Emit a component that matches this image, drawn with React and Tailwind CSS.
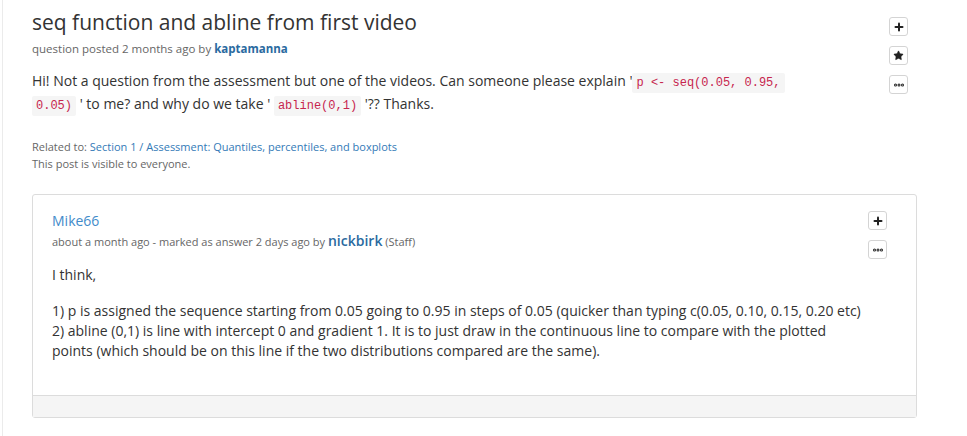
import { Plus, Star, Ellipsis } from "lucide-react";

const IconButton = ({ children }) => (
  <button className="w-[19px] h-[19px] flex items-center justify-center bg-white border border-[#d4d4d4] rounded-[3px] text-[#222]">
    {children}
  </button>
);

const Code = ({ children }) => (
  <code className="inline-block leading-[20px] font-['Liberation_Mono','DejaVu_Sans_Mono',monospace] text-[12px] text-[#c7254e] bg-[#f5f5f5] px-[4px] rounded-[2px]">
    {children}
  </code>
);

export default function App() {
  return (
    <div className="w-[967px] h-[436px] bg-white font-['Open_Sans',sans-serif] text-[#333] overflow-hidden">
      <div className="ml-[2px] h-full border-l border-[#ebebeb] pl-[29px] pr-[50px]">
        {/* question */}
        <div className="flex">
          <div className="flex-1 pt-[9px]">
            <h1 className="text-[21px] leading-[26px] font-normal text-[#333]">
              seq function and abline from first video
            </h1>
            <div className="mt-[6px] text-[11.5px] leading-[16px] text-[#666]">
              question posted 2 months ago by{" "}
              <a className="font-bold text-[#2a6aa0]">kaptamanna</a>
            </div>
            <div className="mt-[13px] text-[14px] leading-[21px] w-[800px]">
              Hi! Not a question from the assessment but one of the videos. Can someone please explain '
              <Code>p &lt;- seq(0.05, 0.95,</Code>
              <br />
              <Code>0.05)</Code> ' to me? and why do we take '{" "}
              <Code>abline(0,1)</Code> '?? Thanks.
            </div>
            <div className="mt-[22px] text-[11px] leading-[17px] text-[#666]">
              <div>
                Related to: <a className="text-[#337ab7]">Section 1 / Assessment: Quantiles, percentiles, and boxplots</a>
              </div>
              <div>This post is visible to everyone.</div>
            </div>
          </div>
          <div className="flex flex-col gap-[10px] pt-[17px] pr-[9px]">
            <IconButton>
              <Plus size={12} strokeWidth={4} />
            </IconButton>
            <IconButton>
              <Star size={11} fill="currentColor" strokeWidth={1} />
            </IconButton>
            <IconButton>
              <Ellipsis size={12} strokeWidth={4} />
            </IconButton>
          </div>
        </div>

        {/* answer */}
        <div className="mt-[22px] border border-[#dcdcdc] rounded-[3px]">
          <div className="flex pl-[19px] pr-[29px] pt-[16px] pb-[34px]">
            <div className="flex-1 text-[14px] leading-[20px]">
              <a className="text-[#428bca]">Mike66</a>
              <div className="text-[11px] leading-[20px] text-[#666]">
                about a month ago - marked as answer 2 days ago by{" "}
                <a className="text-[14px] font-semibold text-[#2a6aa0]">nickbirk</a> (Staff)
              </div>
              <p className="mt-[13px]">I think,</p>
              <p className="mt-[16px] w-[815px]">
                1) p is assigned the sequence starting from 0.05 going to 0.95 in steps of 0.05 (quicker than typing c(0.05, 0.10, 0.15, 0.20 etc)
                <br />
                2) abline (0,1) is line with intercept 0 and gradient 1. It is to just draw in the continuous line to compare with the plotted points (which should be on this line if the two distributions compared are the same).
              </p>
            </div>
            <div className="flex flex-col gap-[10px]">
              <IconButton>
                <Plus size={12} strokeWidth={4} />
              </IconButton>
              <IconButton>
                <Ellipsis size={12} strokeWidth={4} />
              </IconButton>
            </div>
          </div>
          <div className="h-[22px] bg-[#f5f5f5] border-t border-[#dcdcdc]" />
        </div>
      </div>
    </div>
  );
}
